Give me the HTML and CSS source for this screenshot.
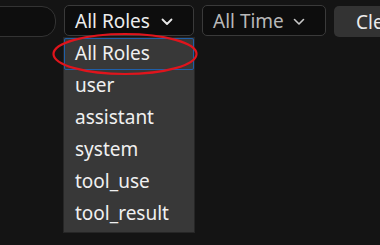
FILE: index.html
```html
<!DOCTYPE html>
<html lang="en">
<head>
<meta charset="utf-8">
<title>Filters</title>
<link rel="stylesheet" href="styles.css">
</head>
<body>
<div class="toolbar">
	<div class="search"></div>
	<div class="select_wrap">
		<div class="select">
			<span>All Roles</span>
			<svg class="chevron" width="12" height="8" viewBox="0 0 12 8"><path d="M1.5 1.5 L6 6 L10.5 1.5" fill="none" stroke="#e8e8e8" stroke-width="1.8" stroke-linecap="round" stroke-linejoin="round"/></svg>
		</div>
		<ul class="dropdown">
			<li class="selected">All Roles</li>
			<li>user</li>
			<li>assistant</li>
			<li>system</li>
			<li>tool_use</li>
			<li>tool_result</li>
		</ul>
		<svg class="circle" width="146" height="44" viewBox="0 0 146 44"><ellipse cx="73" cy="22" rx="71.5" ry="20" fill="none" stroke="#e0141c" stroke-width="2.2"/></svg>
	</div>
	<div class="select time">
		<span>All Time</span>
		<svg class="chevron" width="12" height="8" viewBox="0 0 12 8"><path d="M1.5 1.5 L6 6 L10.5 1.5" fill="none" stroke="#c8c8c8" stroke-width="1.6" stroke-linecap="round" stroke-linejoin="round"/></svg>
	</div>
	<button class="clear">Clear</button>
</div>
</body>
</html>
```

FILE: styles.css
```css
html, body {
    margin: 0;
    padding: 0;
}

body {
    background-color: #141414;
    font-family: "Noto Sans", "Open Sans", sans-serif;
    color: #ececec;
    width: 380px;
    height: 245px;
    overflow: hidden;
}

.toolbar {
    display: flex;
    align-items: flex-start;
    gap: 8px;
    margin-left: -144px;
    padding-top: 5px;
}

.search {
    width: 198px;
    height: 29px;
    border: 1px solid #333;
    border-radius: 14px;
    background: #0e0e0e;
    margin-top: 1px;
    flex: none;
}

.select_wrap {
    position: relative;
    flex: none;
}

.select {
    display: flex;
    align-items: center;
    gap: 11px;
    box-sizing: border-box;
    height: 31px;
    padding: 0 18px 0 10px;
    border: 1px solid #3a3a3a;
    border-radius: 5px;
    background: #0d0d0d;
    font-size: 19px;
    flex: none;
}

.select_wrap .select {
    width: 130px;
}

.time {
    width: 124px;
    color: #b8b8b8;
    gap: 9px;
}

.chevron {
    margin-top: 2px;
}

.dropdown {
    position: absolute;
    top: 32px;
    left: -1px;
    width: 130px;
    margin: 0;
    padding: 0 0 2px;
    list-style: none;
    background: #383838;
    border: 1px solid #262626;
    z-index: 1;
}

.dropdown li {
    height: 32px;
    line-height: 31px;
    padding-left: 11px;
    font-size: 19px;
    color: #f0f0f0;
    box-sizing: border-box;
}

.dropdown li.selected {
    border: 1px solid #1f5fa8;
    border-radius: 2px;
    padding-left: 10px;
    line-height: 29px;
}

.circle {
    position: absolute;
    top: 27px;
    left: -12px;
    z-index: 2;
}

.clear {
    height: 31px;
    margin-top: 1px;
    padding: 0 22px;
    border: none;
    border-radius: 5px;
    background: #333;
    color: #ececec;
    font-family: "Noto Sans", "Open Sans", sans-serif;
    font-size: 19px;
    flex: none;
}
```
